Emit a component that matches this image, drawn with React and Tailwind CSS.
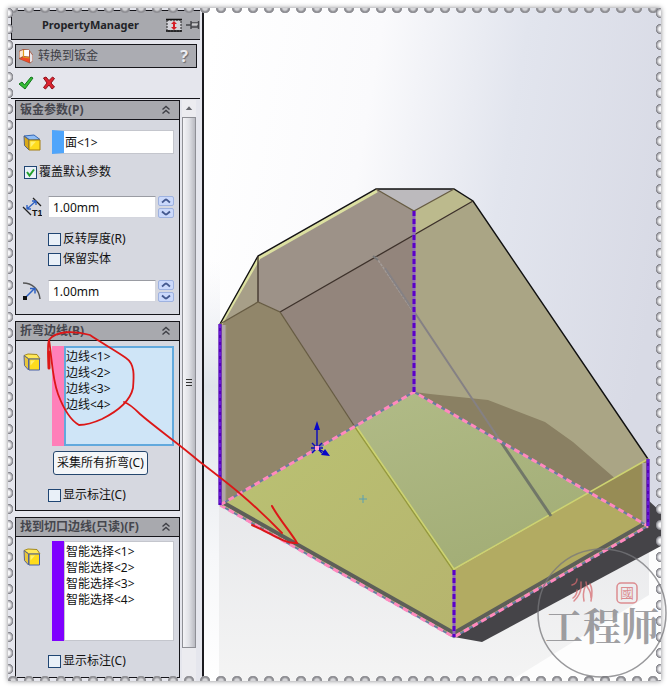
import React from "react";

function ChevronsUp() {
  return (
    <svg viewBox="0 0 10 10" className="h-2.5 w-2.5" fill="none" stroke="#3f4046" strokeWidth="1.4" aria-hidden="true">
      <path d="M1.5 4.5 5 1.5l3.5 3M1.5 8.5 5 5.5l3.5 3" />
    </svg>
  );
}

function FaceIcon() {
  return (
    <svg viewBox="0 0 20 20" className="h-5 w-5" aria-hidden="true">
      <path d="M2 4 12 3l6 4.500-10 .5z" fill="#8fbdf5" stroke="#3567b5" />
      <path d="M2 4 7 8v10L2.500 13.500z" fill="#d8a818" stroke="#54617f" />
      <path d="M7 8H18V18H7z" fill="#ffdc1c" stroke="#a47c10" />
      <path d="M8.500 9.500H14l-5.500 6z" fill="#fff06e" />
    </svg>
  );
}

function EdgeIcon() {
  return (
    <svg viewBox="0 0 20 20" className="h-5 w-5" aria-hidden="true">
      <path d="M2 3.500 6 2l9 .5 3 4.500H7z" fill="#ffe95a" stroke="#a58a1d" />
      <path d="M2 3.500 6.500 7v11L2.500 13.500z" fill="#e8c63a" stroke="#5a6590" />
      <path d="M7 7h10.500v11H7z" fill="#ffdc1c" stroke="#4860a8" />
      <path d="M8.500 8.500H13l-4.500 5z" fill="#fff06e" />
    </svg>
  );
}

function ThicknessIcon() {
  return (
    <svg viewBox="0 0 20 20" className="h-5 w-5" fill="none" aria-hidden="true">
      <path d="M1 10l8 8M11 1l8 8" stroke="#222" strokeWidth="1.3" />
      <path d="M5 12 14 4M5 12V8M5 12h4M14 4h-4M14 4v4" stroke="#2f62c4" strokeWidth="1.4" />
      <text x="10" y="19" fontFamily="Liberation Sans, sans-serif" fontSize="9" fontWeight="700" fill="#111">T1</text>
    </svg>
  );
}

function RadiusIcon() {
  return (
    <svg viewBox="0 0 20 20" className="h-5 w-5" fill="none" aria-hidden="true">
      <path d="M1 2c9 0 16 6 17 16" stroke="#555" strokeWidth="1.5" />
      <path d="M3 17 13 7M8 7.500h5v5" stroke="#2f62c4" strokeWidth="1.5" />
      <path d="M1 15h4v4H1z" fill="#111" />
    </svg>
  );
}

function Group({ title, children }) {
  return (
    <section className="border border-[#15151a] bg-[#d6d8e0]">
      <h2 className="flex h-[19px] items-center justify-between border-b border-[#15151a] bg-[#a8a9ae] pr-2 pl-1 text-xs font-bold text-[#45464d]">
        <span className="whitespace-nowrap">{title}</span>
        <button type="button" aria-label={"折叠 " + title}>
          <ChevronsUp />
        </button>
      </h2>
      <div className="flex flex-col pr-[5px] pl-1.5">{children}</div>
    </section>
  );
}

function Tick({ label, checked = false }) {
  return (
    <label className="flex h-5 items-center gap-0.5 whitespace-nowrap">
      <span className="relative flex h-[13px] w-[13px]">
        <input type="checkbox" defaultChecked={checked} className="peer h-[13px] w-[13px] appearance-none border border-[#1f4573] bg-[#e9f0f8]" />
        <svg viewBox="0 0 13 13" className="pointer-events-none absolute inset-0 hidden peer-checked:block" fill="none" aria-hidden="true">
          <path d="M3 6l2.500 3.500L10 3.500" stroke="#22a02c" strokeWidth="2" />
        </svg>
      </span>
      {label}
    </label>
  );
}

function Spin({ up }) {
  return (
    <button type="button" aria-label={up ? "增加" : "减少"} className="flex h-2.5 w-4 items-center justify-center rounded-xs border border-[#9eb2e0] bg-[#cbd9fb]">
      <svg viewBox="0 0 10 6" className="h-1.5 w-2.5" fill="none" stroke="#44598f" strokeWidth="2" aria-hidden="true">
        <path d={up ? "M1 4.500C3 3 4 1.500 5 1.500s2 1.500 4 3" : "M1 1.500c2 1.500 3 3 4 3s2-1.500 4-3"} />
      </svg>
    </button>
  );
}

function NumberRow({ icon, label, value }) {
  return (
    <div className="flex items-center">
      <span className="w-[26px] shrink-0">{icon}</span>
      <input aria-label={label} defaultValue={value} className="h-[22px] w-0 flex-1 border border-[#d4d6de] border-t-[#9a9ca3] bg-white px-1 text-xs" />
      <span className="ml-0.5 flex flex-col gap-0.5">
        <Spin up />
        <Spin />
      </span>
    </div>
  );
}

function TitleIcon() {
  return (
    <svg viewBox="0 0 16 16" className="h-4 w-4 shrink-0" aria-hidden="true">
      <path d="M1 3 5 1l6 .5 4 5.500v6l-3 2.500-11-4.500z" fill="#a8543a" />
      <path d="M1.500 3.500 5 2v6L1.500 10z" fill="#fbe9d8" />
      <path d="M6 2h5v6.500L6 8z" fill="#ffffff" />
      <path d="M2 11 5.500 9l6 1v4.500z" fill="#f04a28" />
      <path d="M5.500 2v7l6 1" fill="none" stroke="#e09a1c" strokeWidth="1.200" />
      <path d="M12 4l2.500 3.500V13L12 14.500z" fill="#e8e6ea" />
    </svg>
  );
}

function PropertyManager() {
  return (
    <aside className="flex w-[196px] shrink-0 flex-col border-r-2 border-[#1b1b1f] bg-[#e5e6ed] pl-[3px]">
      <div className="mt-0.5 mr-0.5 flex h-[30px] items-center justify-between border-t border-b border-l border-[#15151a] bg-[#a8a9ae] pl-[30px]">
        <h1 className="text-[11px] font-bold text-[#222327]">PropertyManager</h1>
        <span className="flex items-center gap-1">
          <button type="button" aria-label="展开">
            <svg viewBox="0 0 16 14" className="h-3.5 w-4" aria-hidden="true">
              <path d="M1 2h14v11H1z" fill="#d4d4da" stroke="#222" strokeDasharray="2 1" />
              <path d="M0 1.500h16M0 13h16" stroke="#111" strokeWidth="1.300" />
              <path d="M8 3l3 3H9v3h2l-3 3-3-3h2V6H5z" fill="#d51c25" />
            </svg>
          </button>
          <button type="button" aria-label="固定">
            <svg viewBox="0 0 14 12" className="h-3 w-3.5" aria-hidden="true">
              <path d="M0 6h5M5 2v8M5 4h7V8H5M12.500 2v8" fill="none" stroke="#44454a" strokeWidth="1.400" />
              <path d="M6 5h6" stroke="#eee" />
            </svg>
          </button>
        </span>
      </div>
      <div className="mt-1 mr-[5px] ml-1 flex h-6 items-center gap-1 border border-[#15151a] bg-[#abacb2] px-0.5">
        <TitleIcon />
        <span className="flex-1 text-xs text-[#3f4046]">转换到钣金</span>
        <button type="button" aria-label="帮助" className="w-5 text-base leading-4 font-bold text-[#ececf0] [text-shadow:1px_1px_1px_#66676d]">?</button>
      </div>
      <div className="flex h-[30px] items-center gap-2 pl-[7px]">
        <button type="button" aria-label="确定">
          <svg viewBox="0 0 16 14" className="h-3.5 w-4" aria-hidden="true">
            <path d="M1 8l3-2 2.500 3L13 1l2 1L7 13z" fill="#35bd35" stroke="#12751c" />
          </svg>
        </button>
        <button type="button" aria-label="取消">
          <svg viewBox="0 0 14 14" className="h-3.5 w-3.5" aria-hidden="true">
            <path d="M1.500 2 4 1l3 3.500L10.500 1l2 1.500L9 7l3.500 4-2.500 2-3-4-3.500 4-2-1.500L5 7z" fill="#dd2430" stroke="#8e1119" />
          </svg>
        </button>
      </div>
      <div className="mr-0.5 flex flex-1 border-t border-[#15151a] pt-px">
        <div className="ml-1 flex flex-1 flex-col gap-1.5 text-xs">
          <Group title="钣金参数(P)">
            <div className="mt-2.5 flex items-center">
              <span className="w-[30px] shrink-0"><FaceIcon /></span>
              <input aria-label="固定实体" defaultValue="面<1>" className="h-6 w-0 flex-1 border border-l-12 border-[#c4c6cd] border-l-[#4fa5fb] bg-white pl-px text-xs" />
            </div>
            <div className="mt-2 ml-0.5"><Tick label="覆盖默认参数" checked /></div>
            <div className="mt-3.5"><NumberRow icon={<ThicknessIcon />} label="厚度" value="1.00mm" /></div>
            <div className="mt-[11px] ml-[26px]">
              <Tick label="反转厚度(R)" />
              <Tick label="保留实体" />
            </div>
            <div className="mt-[11px] mb-3"><NumberRow icon={<RadiusIcon />} label="半径" value="1.00mm" /></div>
          </Group>
          <Group title="折弯边线(B)">
            <div className="mt-[5px] flex items-start">
              <span className="mt-1.5 w-[30px] shrink-0"><EdgeIcon /></span>
              <span className="flex flex-1 bg-[#ff7fb9] pl-3">
                <textarea aria-label="折弯边线" defaultValue={"边线<1>\n边线<2>\n边线<3>\n边线<4>"} className="h-[100px] w-0 flex-1 resize-none overflow-hidden border-2 border-[#62a9dd] bg-[#cfe5f7] pt-px leading-4" />
              </span>
            </div>
            <button type="button" className="mt-[5px] ml-[31px] h-6 self-start rounded-[3px] border border-[#25476e] bg-[#f4f6f8] px-[3px] whitespace-nowrap">采集所有折弯(C)</button>
            <div className="mt-2.5 mb-[5px] ml-[26px]"><Tick label="显示标注(C)" /></div>
          </Group>
          <Group title="找到切口边线(只读)(F)">
            <div className="mt-1 flex items-start">
              <span className="mt-1.5 w-[30px] shrink-0"><EdgeIcon /></span>
              <span className="flex flex-1 bg-[#7f00ff] pl-3">
                <textarea readOnly aria-label="切口边线" defaultValue={"智能选择<1>\n智能选择<2>\n智能选择<3>\n智能选择<4>"} className="h-[100px] w-0 flex-1 resize-none overflow-hidden border border-[#c4c6cd] bg-white pt-0.5 pl-px leading-4" />
              </span>
            </div>
            <div className="mt-2.5 mb-1.5 ml-[26px]"><Tick label="显示标注(C)" /></div>
          </Group>
        </div>
        <div className="mr-1 ml-0.5 flex w-[14px] flex-col bg-[#ececf0]">
          <svg viewBox="0 0 15 17" className="h-[17px]" aria-hidden="true">
            <path d="M4 10l3.500-4 3.500 4z" fill="#66676d" />
          </svg>
          <div className="flex flex-1 flex-col items-center justify-center gap-0.5 border border-[#8f9096] bg-linear-to-r from-[#f4f4f7] via-[#e0e1e6] to-[#b9bac1]">
            <span className="h-px w-1.5 bg-[#333]" />
            <span className="h-px w-1.5 bg-[#333]" />
            <span className="h-px w-1.5 bg-[#333]" />
          </div>
          <div className="h-[33px]" />
        </div>
      </div>
    </aside>
  );
}

function Model() {
  return (
    <svg viewBox="204 8 457 673" preserveAspectRatio="xMinYMin slice" className="h-full w-full" role="img" aria-label="钣金模型">
      <defs>
        <linearGradient id="sky" x1="0" y1="0.1" x2="1" y2="0.35">
          <stop offset="0" stopColor="#ffffff" />
          <stop offset="0.35" stopColor="#fafafc" />
          <stop offset="0.65" stopColor="#e2e5ee" />
          <stop offset="1" stopColor="#d8dae5" />
        </linearGradient>
        <linearGradient id="ground" x1="0" y1="0" x2="0" y2="1">
          <stop offset="0" stopColor="#e6e7ea" />
          <stop offset="1" stopColor="#f4f4f4" />
        </linearGradient>
        <linearGradient id="edge" x1="0" y1="0" x2="0" y2="1">
          <stop offset="0" stopColor="#eceef4" stopOpacity="0" />
          <stop offset="0.3" stopColor="#dfe4ea" />
          <stop offset="0.7" stopColor="#f6f7f9" />
          <stop offset="1" stopColor="#ffffff" />
        </linearGradient>
        <linearGradient id="inner" x1="0" y1="0" x2="0.4" y2="1">
          <stop offset="0" stopColor="#b1bb87" />
          <stop offset="1" stopColor="#a3ae77" />
        </linearGradient>
        <linearGradient id="yellow" x1="0" y1="0" x2="1" y2="1">
          <stop offset="0" stopColor="#bac273" />
          <stop offset="1" stopColor="#b6b46e" />
        </linearGradient>
      </defs>
      <path d="M204 8h457v673H204z" fill="url(#sky)" />
      <path d="M204 260h16v421h-16z" fill="url(#edge)" />
      <path d="M219 530h442v151H219z" fill="#fdfdfd" />
      <path d="M219 490h430v105L510 681H219z" fill="url(#ground)" />
      <path d="M454 637 648 500l13 12v34L482 642z" fill="#454448" />

      <path d="M220 324 258 256v46z" fill="#a79f88" />
      <path d="M258 256 376 189l38 22v24L280 312l-22-10z" fill="#9d9288" />
      <path d="M376 189h78l-40 22z" fill="#bcbabd" />
      <path d="m414 211 40-22 19 12-59 34z" fill="#bcba8d" />
      <path d="M414 235 473 201 648 459v67L414 392z" fill="#aaa585" />
      <path d="M414 392l16 2 58 6 57 22 28 20 75 65v19z" fill="#8a8063" />
      <path d="M280 312 414 235v157l-59 35z" fill="#93857c" />
      <path d="M220 324 258 302l22 10 75 115-135 78z" fill="#91866a" />
      <path d="M355 427 414 392l174 101-135 77z" fill="url(#inner)" />
      <path d="M588 493 648 459v67z" fill="#978c55" />
      <path d="M453 570 588 493l60 33-194 111z" fill="#b2ab62" />
      <path d="M355 427 453 570l1 67-234-132z" fill="url(#yellow)" />

      <g fill="none">
        <path d="M221 324 259 258 377 191" stroke="#dce0a0" strokeWidth="3" />
        <path d="M220 324 258 256 376 189h78l19 12 175 258" stroke="#111" strokeWidth="1.400" />
        <path d="M258 256v46M280 312 473 201" stroke="#3c3029" strokeWidth="1.300" />
        <path d="M220 324 258 302l22 10L355 427M376 189l38 22 40-22" stroke="#665b42" strokeWidth="1.300" />
        <path d="M355 427 453 570" stroke="#969a3d" strokeWidth="1.500" />
        <path d="M356 426 454 569 648 459" stroke="#cdd371" strokeWidth="1.500" />
        <path d="M376 257 414 313" stroke="#a39c98" strokeWidth="1.500" strokeDasharray="3 1" />
        <path d="M373 256l5 4" stroke="#777" strokeWidth="2" />
        <path d="M385 268 501 442" stroke="#858184" strokeWidth="2" />
        <path d="M501 442 551 516" stroke="#717768" strokeWidth="3" />
        <path d="M224 503 454 633 644 524" stroke="#5d5f59" strokeWidth="4" />
        <path d="M224 325v177M644 463v62" stroke="#afa4aa" strokeWidth="4" />
        <path d="M226 325v175M642 464v58" stroke="#99916b" />
        <path d="M220 505 414 392 648 526M220 505l234 132 194-111" stroke="#697ca0" strokeWidth="2" />
        <path d="M220 505 414 392 648 526M220 505l234 132 194-111" stroke="#ff89be" strokeWidth="3" strokeDasharray="6 4" />
        <path d="M220 324v181M414 211v181M648 459v67M454 570v67" stroke="#8f69b8" strokeWidth="3" />
        <path d="M220 324v181M648 459v67" stroke="#5400bd" strokeWidth="3" />
        <path d="M414 211v181M454 570v67" stroke="#5b00c8" strokeWidth="3" strokeDasharray="5 3" />
        <path d="M220 324v181M648 459v67" stroke="#7c36ef" strokeDasharray="4 3" />
        <path d="M363 495v8M359 499h8" stroke="#5ba0b2" />
        <path d="M317 448V428M317 448l9 5M312 443l10 10M312 453l10-10M311 448h12" stroke="#0808c0" strokeWidth="1.400" />
      </g>
      <path d="M317 421l3 9h-6zM330 456l-9-1 4-6z" fill="#0808c8" />
      <path d="M315 446h4v4h-4z" fill="#ff9bd0" />
    </svg>
  );
}

function Annotation() {
  return (
    <svg width="310" height="560" viewBox="0 0 310 560" className="pointer-events-none absolute top-0 left-0" fill="none" stroke="#dc1717" strokeWidth="1.800" strokeLinecap="round" aria-hidden="true">
      <path d="M49 368C48 356 47 346 49 340C56 330 76 331 90 335C100 342 118 352 126 358C135 364 134 376 133 388C130 402 116 412 102 419C91 424 86 425 79 425C70 420 64 410 58 394C52 378 52 358 49 340" />
      <path d="M49 352v16" strokeWidth="3" />
      <path d="M124 402c6 2 12 8 16 12 16 14 38 29 60 48 30 23 51 39 82 71" />
      <path d="M272 506c7 13 20 28 25 37-12 1-25-9-45-18" strokeWidth="2" />
    </svg>
  );
}

function Watermark() {
  return (
    <svg viewBox="0 0 132 132" className="pointer-events-none absolute right-0 bottom-2.5 h-[132px] w-[132px]" role="img" aria-label="六國工程师">
      <circle cx="65" cy="66" r="64" fill="none" stroke="#77777b" strokeOpacity="0.75" strokeWidth="1.500" />
      <g fill="none" stroke="#d56b70" strokeOpacity="0.75" strokeWidth="1.500" strokeLinecap="round">
        <path d="M35 38c4-1 5-3 5-6M44 35v5c0 6-3 10-7 14M49 35c0 8 5 5 5 16M40 43c0 3-1 6-4 8M53 37c3 5 2 12 1 17M48 40c-2 5-2 9-1 14" />
        <rect x="80" y="36" width="20" height="20" rx="4" />
      </g>
      <text x="90" y="51" textAnchor="middle" fontFamily="'Noto Sans CJK TC', sans-serif" fontSize="14" fill="#d56b70" fillOpacity="0.75">國</text>
      <text x="65" y="93" textAnchor="middle" fontFamily="'Noto Serif CJK SC', 'Noto Sans CJK SC', serif" fontSize="38" fontWeight="700" fill="#77777b" fillOpacity="0.7">工程师</text>
    </svg>
  );
}

function Perforations() {
  return (
    <div className="pointer-events-none absolute inset-0" aria-hidden="true">
      <div className="absolute inset-x-0 top-0 h-1.5 bg-[radial-gradient(circle_at_50%_0,#d5d5d8_0_2px,#89898e_4px,#99999e_5px,transparent_5.5px)] bg-size-[16px_6px] bg-position-[-3px_0]" />
      <div className="absolute inset-x-0 bottom-0 h-1.5 bg-[radial-gradient(circle_at_50%_100%,#d5d5d8_0_2px,#89898e_4px,#99999e_5px,transparent_5.5px)] bg-size-[16px_6px] bg-position-[-3px_0]" />
      <div className="absolute inset-y-0 left-0 w-1.5 bg-[radial-gradient(circle_at_0_50%,#f5f5f7_0_2px,#aaaab0_4px,#7c7c82_5px,transparent_5.5px)] bg-size-[6px_16px] bg-position-[0_-3px]" />
      <div className="absolute inset-y-0 right-0 w-1.5 bg-[radial-gradient(circle_at_100%_50%,#f5f5f7_0_2px,#aaaab0_4px,#7c7c82_5px,transparent_5.5px)] bg-size-[6px_16px] bg-position-[0_-3px]" />
    </div>
  );
}

export default function App() {
  return (
    <main className="relative flex min-h-screen bg-white p-2 font-['Noto_Sans','Noto_Sans_CJK_SC',sans-serif] text-xs text-[#111]">
      <div className="relative flex flex-1 shadow-[0_0_5px_#88888c]">
        <PropertyManager />
        <div className="relative min-w-0 flex-1">
          <div className="absolute inset-0">
            <Model />
          </div>
        </div>
        <Perforations />
      </div>
      <Annotation />
      <Watermark />
    </main>
  );
}
